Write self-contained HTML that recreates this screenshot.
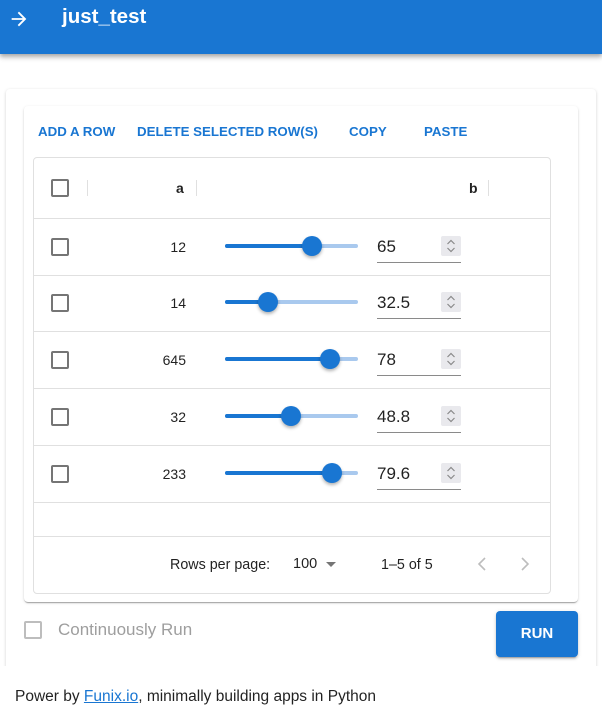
<!DOCTYPE html>
<html><head><meta charset="utf-8">
<style>
*{box-sizing:border-box;margin:0;padding:0}
body{width:602px;height:726px;background:#fff;font-family:"Liberation Sans",sans-serif;position:relative;overflow:hidden;color:rgba(0,0,0,.87)}
.abs{position:absolute}
.hdr{left:0;top:0;width:602px;height:54px;background:#1976d2;box-shadow:0 2px 4px rgba(0,0,0,.25),0 4px 5px rgba(0,0,0,.14)}
.outer{left:6px;top:89px;width:590px;height:600px;border-radius:4px;box-shadow:0 1px 3px rgba(0,0,0,.18);background:#fff}
.inner{left:24px;top:106px;width:554px;height:496px;border-radius:4px;box-shadow:0 2px 1px -1px rgba(0,0,0,.2),0 1px 1px rgba(0,0,0,.14),0 1px 3px rgba(0,0,0,.12);background:#fff}
.btn{color:#1976d2;font-size:13.3px;font-weight:bold;top:124px}
.grid{left:33px;top:157px;width:518px;height:437px;border:1px solid #e0e0e0;border-radius:4px}
.hl{left:33px;width:518px;height:1px;background:#e0e0e0}
.cb{width:18px;height:18px;border:2px solid #757575;border-radius:2px}
.sep{width:1px;height:16px;background:#e0e0e0}
.num{font-size:14px;text-align:right;width:60px}
.track{left:225px;width:133px;height:4px;background:#a9c9ee;border-radius:2px}
.fill{position:absolute;left:0;top:0;height:4px;background:#1976d2;border-radius:2px}
.thumb{width:20px;height:20px;border-radius:50%;background:#1976d2;box-shadow:0 2px 3px rgba(0,0,0,.3)}
.inp{left:377px;width:84px;font-size:17px;border-bottom:1px solid #8a8a8a;height:28px;padding-top:2px}
</style></head><body>
<div class="abs hdr"></div>
<svg class="abs" style="left:8px;top:8px" width="22" height="22" viewBox="0 0 24 24"><path d="M12 4l-1.41 1.41L16.17 11H4v2h12.17l-5.58 5.59L12 20l8-8z" fill="#fff"/></svg>
<div class="abs" style="left:62px;top:5px;color:#fff;font-size:20.5px;font-weight:bold">just_test</div>
<div class="abs outer"></div>
<div class="abs inner"></div>
<div class="abs btn" style="left:38px">ADD A ROW</div>
<div class="abs btn" style="left:137px">DELETE SELECTED ROW(S)</div>
<div class="abs btn" style="left:349px">COPY</div>
<div class="abs btn" style="left:424px">PASTE</div>
<div class="abs grid"></div>
<div class="abs cb" style="left:51px;top:179px"></div>
<div class="abs sep" style="left:87px;top:180px"></div>
<div class="abs" style="left:176px;top:180px;font-size:14px;font-weight:bold">a</div>
<div class="abs sep" style="left:196px;top:180px"></div>
<div class="abs" style="left:469px;top:180px;font-size:14px;font-weight:bold">b</div>
<div class="abs sep" style="left:488px;top:180px"></div>

<div class="abs hl" style="top:218px"></div>
<div class="abs hl" style="top:275px"></div>
<div class="abs hl" style="top:331px"></div>
<div class="abs hl" style="top:388px"></div>
<div class="abs hl" style="top:445px"></div>
<div class="abs hl" style="top:502px"></div>
<div class="abs hl" style="top:536px"></div>

<svg width="0" height="0" style="position:absolute"><defs><g id="sp"><rect width="20" height="20" rx="2" fill="#e9e9ed"/><path d="M6.5 8l3.5-3.5L13.5 8M6.5 12l3.5 3.5 3.5-3.5" stroke="#8a8a8a" stroke-width="1.2" fill="none"/></g></defs></svg>

<div class="abs cb" style="left:51px;top:238px"></div>
<div class="abs num" style="left:126px;top:239px">12</div>
<div class="abs track" style="top:244px"><div class="fill" style="width:86px"></div></div>
<div class="abs thumb" style="left:302px;top:236px"></div>
<div class="abs inp" style="top:235px">65</div>
<svg class="abs" style="left:441px;top:236px" width="20" height="20"><use href="#sp"/></svg>

<div class="abs cb" style="left:51px;top:294px"></div>
<div class="abs num" style="left:126px;top:295px">14</div>
<div class="abs track" style="top:300px"><div class="fill" style="width:43px"></div></div>
<div class="abs thumb" style="left:258px;top:292px"></div>
<div class="abs inp" style="top:291px">32.5</div>
<svg class="abs" style="left:441px;top:292px" width="20" height="20"><use href="#sp"/></svg>

<div class="abs cb" style="left:51px;top:351px"></div>
<div class="abs num" style="left:126px;top:352px">645</div>
<div class="abs track" style="top:357px"><div class="fill" style="width:104px"></div></div>
<div class="abs thumb" style="left:320px;top:349px"></div>
<div class="abs inp" style="top:348px">78</div>
<svg class="abs" style="left:441px;top:349px" width="20" height="20"><use href="#sp"/></svg>

<div class="abs cb" style="left:51px;top:408px"></div>
<div class="abs num" style="left:126px;top:409px">32</div>
<div class="abs track" style="top:414px"><div class="fill" style="width:65px"></div></div>
<div class="abs thumb" style="left:281px;top:406px"></div>
<div class="abs inp" style="top:405px">48.8</div>
<svg class="abs" style="left:441px;top:406px" width="20" height="20"><use href="#sp"/></svg>

<div class="abs cb" style="left:51px;top:465px"></div>
<div class="abs num" style="left:126px;top:466px">233</div>
<div class="abs track" style="top:471px"><div class="fill" style="width:106px"></div></div>
<div class="abs thumb" style="left:322px;top:463px"></div>
<div class="abs inp" style="top:462px">79.6</div>
<svg class="abs" style="left:441px;top:463px" width="20" height="20"><use href="#sp"/></svg>

<div class="abs" style="left:170px;top:557px;font-size:14.3px">Rows per page:</div>
<div class="abs" style="left:293px;top:556px;font-size:14.5px">100</div>
<svg class="abs" style="left:325px;top:561px" width="12" height="8"><path d="M1 1h10L6 6z" fill="#757575"/></svg>
<div class="abs" style="left:381px;top:557px;font-size:14.3px">1–5 of 5</div>
<svg class="abs" style="left:476px;top:556px" width="12" height="16"><path d="M9 2L3 8l6 6" stroke="#bdbdbd" stroke-width="1.6" fill="none"/></svg>
<svg class="abs" style="left:519px;top:556px" width="12" height="16"><path d="M3 2l6 6-6 6" stroke="#bdbdbd" stroke-width="1.6" fill="none"/></svg>

<div class="abs cb" style="left:24px;top:621px;border-color:#bdbdbd"></div>
<div class="abs" style="left:58px;top:620px;font-size:17px;color:#9e9e9e">Continuously Run</div>
<div class="abs" style="left:496px;top:611px;width:82px;height:46px;background:#1976d2;border-radius:4px;box-shadow:0 3px 1px -2px rgba(0,0,0,.2),0 2px 2px rgba(0,0,0,.14),0 1px 5px rgba(0,0,0,.12);color:#fff;font-size:15px;font-weight:bold;text-align:center;line-height:46px">RUN</div>
<div class="abs" style="left:0;top:666px;width:602px;height:60px;background:#fff"></div>
<div class="abs" style="left:15px;top:688px;font-size:15.5px">Power by <span style="color:#1976d2;text-decoration:underline">Funix.io</span>, minimally building apps in Python</div>
</body></html>
